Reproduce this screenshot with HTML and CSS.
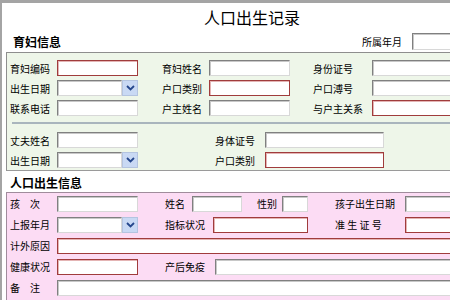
FILE: index.html
```html
<!DOCTYPE html>
<html>
<head>
    <title>人口出生记录</title>
    <link rel="stylesheet" href="styles.css">
</head>
<body>
    <div id="page">
        <h1 class="title">人口出生记录</h1>
        <div class="head-row">
            <span class="sec-title">育妇信息</span>
            <span class="month">所属年月</span>
            <input type="text" class="txt w81 month-in">
        </div>

        <div class="box green">
            <div class="row">
                <span class="lab">育妇编码</span>
                <input type="text" class="txt red w81">
                <span class="lab m24">育妇姓名</span>
                <input type="text" class="txt w81">
                <span class="lab m23 w59">身份证号</span>
                <input type="text" class="txt w81">
            </div>
            <div class="row">
                <span class="lab">出生日期</span>
                <span class="combo"><input type="text" class="txt w65"><span class="drop"><svg width="9" height="6" viewBox="0 0 9 6"><path d="M1 1l3.5 3.5L8 1" fill="none" stroke="#24468c" stroke-width="1.8"/></svg></span></span>
                <span class="lab m24">户口类别</span>
                <input type="text" class="txt red w81">
                <span class="lab m23 w59">户口溥号</span>
                <input type="text" class="txt w81">
            </div>
            <div class="row">
                <span class="lab">联系电话</span>
                <input type="text" class="txt w81">
                <span class="lab m24">户主姓名</span>
                <input type="text" class="txt w81">
                <span class="lab m23 w59">与户主关系</span>
                <input type="text" class="txt red w81">
            </div>
            <div class="sep"></div>
            <div class="row">
                <span class="lab">丈夫姓名</span>
                <input type="text" class="txt w81">
                <span class="lab m77 w50">身体证号</span>
                <input type="text" class="txt w119">
            </div>
            <div class="row">
                <span class="lab">出生日期</span>
                <span class="combo"><input type="text" class="txt w65"><span class="drop"><svg width="9" height="6" viewBox="0 0 9 6"><path d="M1 1l3.5 3.5L8 1" fill="none" stroke="#24468c" stroke-width="1.8"/></svg></span></span>
                <span class="lab m77 w50">户口类别</span>
                <input type="text" class="txt red w119">
            </div>
        </div>

        <div class="sec-title sub">人口出生信息</div>

        <div class="box pink">
            <div class="row tall">
                <span class="lab">孩　次</span>
                <input type="text" class="txt w81">
                <span class="lab m27 w27">姓名</span>
                <input type="text" class="txt w50">
                <span class="lab m15 w25">性别</span>
                <input type="text" class="txt w26">
                <span class="lab m27 w70">孩子出生日期</span>
                <input type="text" class="txt w81">
            </div>
            <div class="row tall">
                <span class="lab">上报年月</span>
                <span class="combo"><input type="text" class="txt w65"><span class="drop"><svg width="9" height="6" viewBox="0 0 9 6"><path d="M1 1l3.5 3.5L8 1" fill="none" stroke="#24468c" stroke-width="1.8"/></svg></span></span>
                <span class="lab m27 w48">指标状况</span>
                <input type="text" class="txt red w95">
                <span class="lab m27 w70">准 生 证 号</span>
                <input type="text" class="txt red w81">
            </div>
            <div class="row tall">
                <span class="lab">计外原因</span>
                <input type="text" class="txt red fill">
            </div>
            <div class="row tall">
                <span class="lab">健康状况</span>
                <input type="text" class="txt red w81">
                <span class="lab m27 w50">产后免疫</span>
                <input type="text" class="txt fill">
            </div>
            <div class="row tall">
                <span class="lab">备　注</span>
                <input type="text" class="txt fill">
            </div>
        </div>
    </div>
</body>
</html>
```

FILE: styles.css
```css
body {
    margin: 0;
    overflow: hidden;
    background-color: #fff;
    font-family: "Noto Sans CJK SC", "DejaVu Sans", sans-serif;
    font-size: 10px;
    color: #000;
}

#page {
    width: 500px;
    height: 300px;
    border-top: 3px solid #a4a4a4;
    border-left: 2px solid #a4a4a4;
}

.title {
    margin: 0;
    height: 28px;
    line-height: 28px;
    font-size: 16px;
    font-weight: normal;
    text-align: center;
}

.head-row {
    display: flex;
    align-items: center;
    height: 21px;
}

.sec-title {
    font-size: 12px;
    font-weight: bold;
    padding-left: 11px;
}

.month {
    margin-left: auto;
    width: 50px;
}

.sub {
    padding-left: 8px;
    height: 21px;
    line-height: 23px;
}

.box {
    margin-left: 4px;
    border-top: 1px solid #8e8e8e;
    border-left: 1px solid #8e8e8e;
    padding-left: 3px;
}

.green {
    background-color: #eef6e9;
    border-bottom: 1px solid #9a9a9a;
    padding-top: 5px;
    padding-bottom: 0;
}

.pink {
    background-color: #fcdcf4;
    border-color: #a08c9c;
    height: 110px;
}

.row {
    display: flex;
    align-items: center;
    height: 20px;
}

.row.tall {
    height: 21px;
}

.sep {
    height: 2px;
    background-color: #a9b5bd;
    margin: 4px 0 6px 2px;
}

.lab {
    width: 47px;
    flex-shrink: 0;
    white-space: nowrap;
}

.m15 { margin-left: 15px; }
.m23 { margin-left: 23px; }
.m24 { margin-left: 24px; }
.m27 { margin-left: 27px; }
.m77 { margin-left: 77px; }

.w25 { width: 25px; }
.w26 { width: 26px; }
.w27 { width: 27px; }
.w48 { width: 48px; }
.w50 { width: 50px; }
.w59 { width: 59px; }
.w65 { width: 65px; }
.w70 { width: 70px; }
.w81 { width: 81px; }
.w95 { width: 95px; }
.w119 { width: 119px; }

.txt {
    box-sizing: border-box;
    height: 16px;
    margin: 0;
    padding: 0;
    flex-shrink: 0;
    background-color: #fff;
    border: 1px solid;
    border-color: #808080 #d8d8d8 #d8d8d8 #808080;
    box-shadow: inset 1px 1px 0 #c8c8c8;
}

.txt.month-in {
    margin-right: 9px;
    height: 17px;
}

.txt.red {
    border-color: #a03c3c;
    box-shadow: inset 1px 1px 0 #e4b4b4;
}

.txt.fill {
    flex: 1;
}

.combo {
    display: flex;
    width: 81px;
    flex-shrink: 0;
}

.drop {
    box-sizing: border-box;
    width: 16px;
    height: 16px;
    display: flex;
    align-items: center;
    justify-content: center;
    background-color: #c9d9f4;
    border: 1px solid #b4c4e0;
}
```
